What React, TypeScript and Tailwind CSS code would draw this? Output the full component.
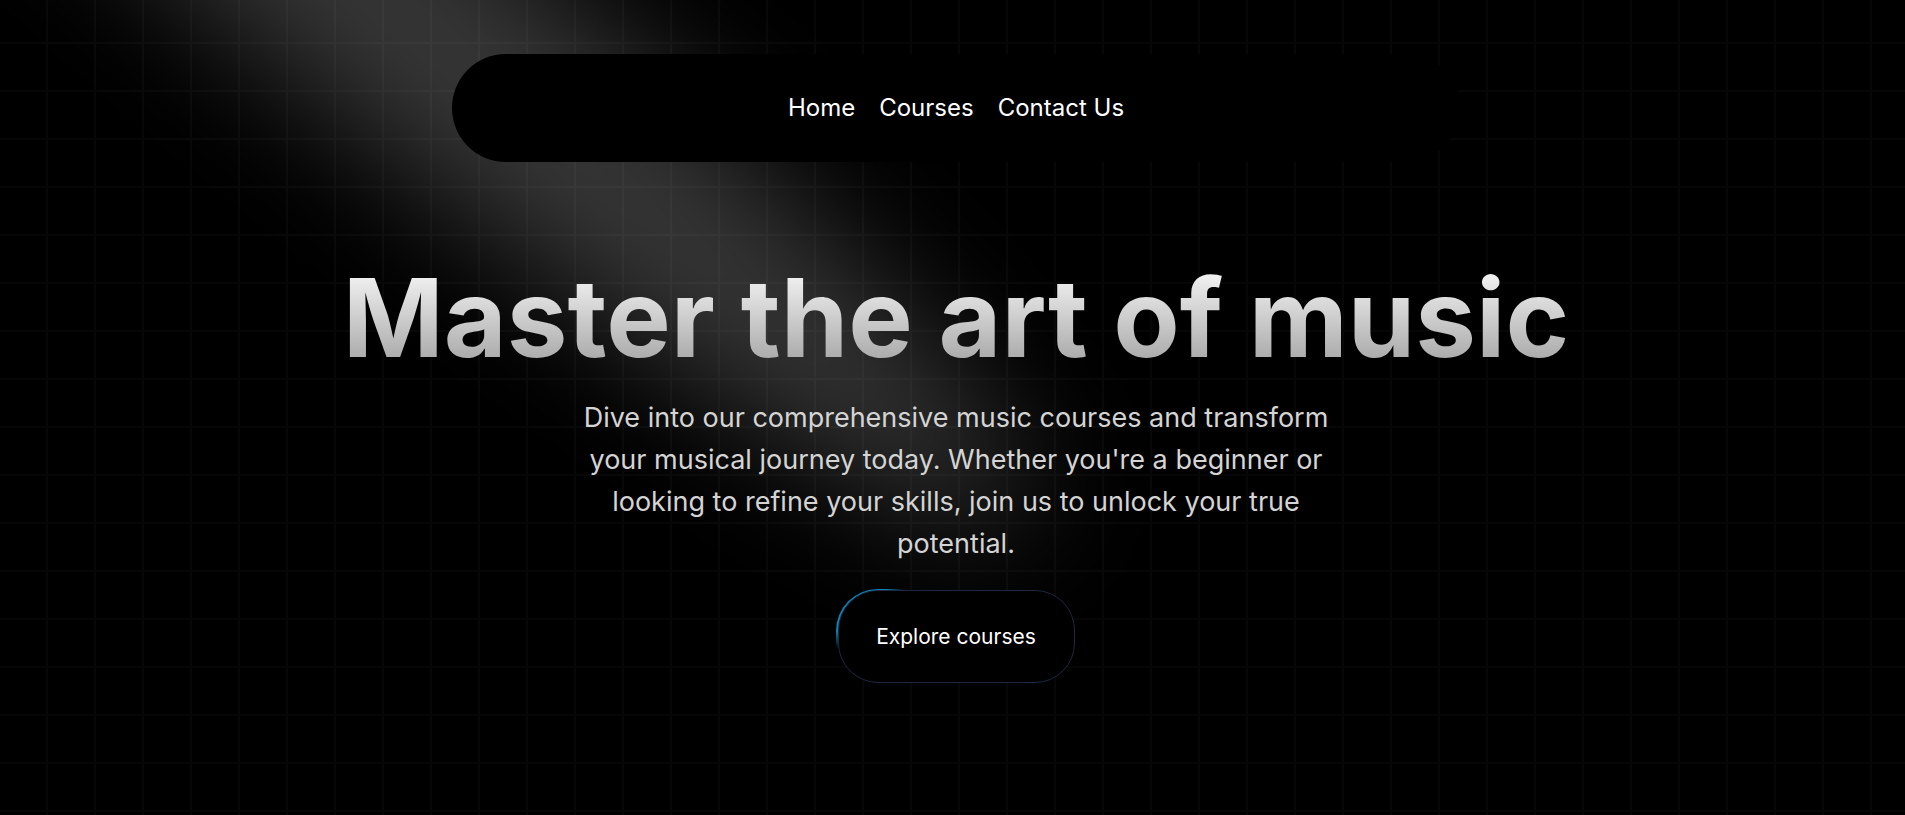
import React from "react";

function Spotlight() {
  return (
    <svg
      className="pointer-events-none absolute inset-0 z-[1] h-full w-full"
      viewBox="0 0 1905 815"
      preserveAspectRatio="none"
      fill="none"
    >
      <defs>
        <filter
          id="spotBlur"
          filterUnits="userSpaceOnUse"
          x="-1500"
          y="-1500"
          width="5000"
          height="4000"
          colorInterpolationFilters="sRGB"
        >
          <feGaussianBlur stdDeviation="64" />
        </filter>
      </defs>
      <ellipse
        cx="392"
        cy="8"
        rx="813"
        ry="118"
        transform="rotate(39 392 8)"
        fill="white"
        fillOpacity="0.21"
        filter="url(#spotBlur)"
      />
    </svg>
  );
}

function MovingBorderButton({ children }: { children: React.ReactNode }) {
  return (
    <div className="relative h-[96px] w-[240px] overflow-hidden rounded-[42px] bg-transparent p-[1.5px]">
      <div className="absolute inset-0">
        <div className="absolute left-[-42px] top-[-48px] h-[120px] w-[120px] bg-[radial-gradient(#0ea5e9_40%,transparent_60%)] opacity-80" />
      </div>
      <div className="relative flex h-full w-full items-center justify-center rounded-[40px] border-[1.5px] border-slate-800 bg-black text-[21px] leading-[30px] text-white">
        {children}
      </div>
    </div>
  );
}

export default function App() {
  return (
    <div className="relative h-screen w-full overflow-hidden bg-black bg-[linear-gradient(to_right,transparent_46px,#070707_46px),linear-gradient(to_bottom,#070707_2px,transparent_2px)] bg-[size:48px_48px] bg-[position:0_42px] pl-[7px] font-['Inter',sans-serif] antialiased">
      <Spotlight />
      <header className="relative z-50 flex justify-center pt-[54px]">
        <nav className="flex h-[108px] w-[1008px] items-center justify-center gap-6 rounded-full bg-black px-12 text-[24px] leading-[36px] text-white">
          <a href="#">Home</a>
          <a href="#">Courses</a>
          <a href="#">Contact Us</a>
        </nav>
      </header>
      <main className="relative z-10 flex flex-col items-center pt-[102px] text-center">
        <h1 className="w-full bg-linear-to-b from-neutral-50 to-neutral-400 bg-clip-text text-[108.5px] font-bold leading-none text-transparent">
          Master the art of music
        </h1>
        <p className="mt-6 max-w-[768px] text-[27px] font-normal leading-[42px] text-neutral-300">
          Dive into our comprehensive music courses and transform your musical
          journey today. Whether you're a beginner or looking to refine your
          skills, join us to unlock your true potential.
        </p>
        <div className="mt-6">
          <MovingBorderButton>Explore courses</MovingBorderButton>
        </div>
      </main>
    </div>
  );
}
